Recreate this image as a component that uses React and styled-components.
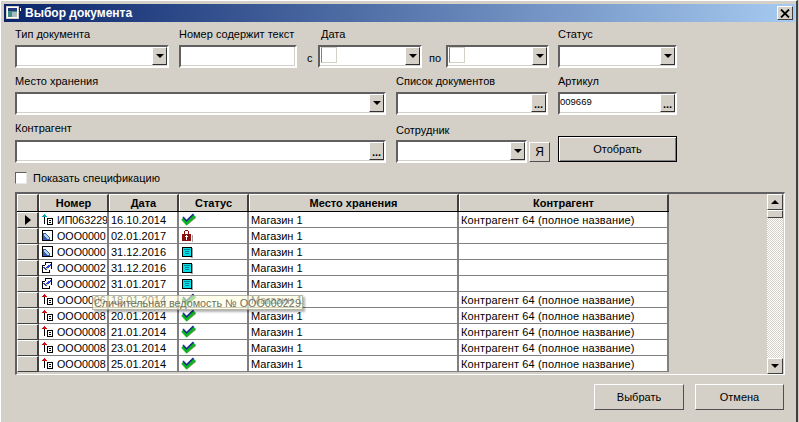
import React from "react";
import styled, { createGlobalStyle } from "styled-components";

const GlobalStyle = createGlobalStyle`
  html, body {
    margin: 0;
    padding: 0;
    background: #d4d0c8;
    overflow: hidden;
  }
  * {
    box-sizing: border-box;
  }
  svg {
    flex-shrink: 0;
  }
`;

const Win = styled.div`
  position: relative;
  width: 798px;
  height: 422px;
  padding: 3px 1px 0 3px;
  background: #d4d0c8;
  border-top: 1px solid #ffffff;
  border-left: 1px solid #ffffff;
  border-right: 2px solid #404040;
  font-family: "Liberation Sans", Arial, sans-serif;
  font-size: 11px;
  color: #000;
`;

const TitleBar = styled.div`
  height: 18px;
  display: flex;
  align-items: center;
  padding: 0 2px;
  gap: 3px;
  background: linear-gradient(90deg, #0a246a, #a6caf0);
  color: #fff;
  font-weight: bold;
  font-size: 12px;
`;

const TitleText = styled.span`
  flex: 1;
`;

const CloseBtn = styled.div`
  width: 16px;
  height: 14px;
  display: flex;
  align-items: center;
  justify-content: center;
  background: #d4d0c8;
  border: 1px solid;
  border-color: #fff #404040 #404040 #fff;
`;

const Form = styled.div`
  display: flex;
  flex-direction: column;
  padding: 0 0 0 11px;
`;

const Row = styled.div`
  display: flex;
  align-items: flex-end;
  height: ${(p) => p.$h}px;
`;

const Field = styled.div`
  display: flex;
  flex-direction: column;
  width: ${(p) => p.$w}px;
  margin-right: ${(p) => p.$mr || 0}px;
  flex-shrink: 0;
`;

const Label = styled.div`
  height: 15px;
  line-height: 13px;
  padding-left: ${(p) => p.$pl || 0}px;
  margin-bottom: ${(p) => p.$mb || 0}px;
  white-space: nowrap;
`;

const Input = styled.div`
  position: relative;
  display: flex;
  align-items: stretch;
  height: 23px;
  background: #fff;
  border: 2px solid;
  border-color: #606060 #fff #fff #606060;
  box-shadow: inset -1px -1px 0 #d4d0c8;
`;

const InputText = styled.div`
  flex: 1;
  font-size: 9.5px;
  line-height: 15px;
`;

const DateBox = styled.div`
  width: 16px;
  height: 16px;
  margin: 0 0 0 1px;
  border: 1px solid #d4d0c8;
  border-left-color: #808080;
  background: #fff;
`;

const Spacer = styled.div`
  flex: 1;
`;

const DropBtn = styled.div`
  width: 15px;
  display: flex;
  align-items: center;
  justify-content: center;
  background: #d4d0c8;
  border: 1px solid;
  border-color: #fff #303030 #303030 #fff;
  margin: 0 0 1px 0;
`;

const Arrow = styled.div`
  width: 0;
  height: 0;
  border-left: 4px solid transparent;
  border-right: 4px solid transparent;
  border-${(p) => (p.$up ? "bottom" : "top")}: 4px solid #000;
`;

const Dots = styled.div`
  font-weight: bold;
  font-size: 11px;
  line-height: 10px;
  margin-top: 1px;
`;

const Conj = styled.div`
  width: ${(p) => p.$w}px;
  height: 23px;
  line-height: 26px;
  padding-left: ${(p) => p.$pl}px;
  flex-shrink: 0;
`;

const MeBtn = styled.div`
  width: 21px;
  height: 20px;
  margin: 0 0 1px 2px;
  display: flex;
  align-items: center;
  justify-content: center;
  font-size: 12px;
  background: #d4d0c8;
  border: 1px solid;
  border-color: #fff #505050 #505050 #fff;
  flex-shrink: 0;
`;

const Push = styled.div`
  height: 26px;
  width: ${(p) => p.$w}px;
  margin-left: ${(p) => p.$ml || 0}px;
  display: flex;
  align-items: center;
  justify-content: center;
  background: #d4d0c8;
  border: 1px solid;
  border-color: ${(p) => (p.$def ? "#000" : "#fff #505050 #505050 #fff")};
  box-shadow: ${(p) =>
    p.$def ? "inset 1px 1px 0 #fff, inset -1px -1px 0 #808080" : "none"};
`;

const FilterSlot = styled.div`
  margin-bottom: 1px;
`;

const CheckRow = styled.div`
  display: flex;
  align-items: center;
  gap: 6px;
  height: 12px;
  margin: 9px 0 0 0;
`;

const CheckBox = styled.div`
  width: 12px;
  height: 12px;
  background: #fff;
  border: 1px solid;
  border-color: #606060 #e8e8e8 #e8e8e8 #606060;
`;

const GridWrap = styled.div`
  display: flex;
  height: 183px;
  margin: 8px 0 0 11px;
  width: 770px;
  background: #d4d0c8;
  border: 1px solid;
  border-width: 2px 1px 1px 2px;
  border-color: #606060 #fff #fff #606060;
`;

const GridBody = styled.div`
  flex: 1;
  overflow: hidden;
`;

const GRID_COLS = "22px 70px 70px 70px 210px 210px";

const HeadRow = styled.div`
  display: grid;
  grid-template-columns: ${GRID_COLS};
  height: 18px;
  border-bottom: 1px solid #000;
  width: 652px;
`;

const HeadCell = styled.div`
  display: flex;
  align-items: center;
  justify-content: center;
  font-weight: bold;
  font-size: 11px;
  background: #d4d0c8;
  border-left: 1px solid #fff;
  border-top: 1px solid #fff;
  border-right: 2px solid #404040;
`;

const DataRow = styled.div`
  display: grid;
  grid-template-columns: ${GRID_COLS};
  height: 16px;
  width: 652px;
  background: #fff;
`;

const Cell = styled.div`
  display: flex;
  align-items: center;
  padding-left: ${(p) => p.$pl ?? 2}px;
  font-size: ${(p) => p.$fs || 11}px;
  white-space: nowrap;
  overflow: hidden;
  border-right: 2px solid #808080;
  border-bottom: 1px solid #808080;
  letter-spacing: ${(p) => p.$ls || 0}px;
`;

const DocSlot = styled.div`
  width: 18px;
  display: flex;
  padding-left: 2px;
  flex-shrink: 0;
`;

const Indicator = styled.div`
  display: flex;
  align-items: center;
  justify-content: flex-start;
  padding-left: 7px;
  background: #d4d0c8;
  border-top: 1px solid #fff;
  border-left: 1px solid #fff;
  border-right: 2px solid #404040;
  border-bottom: 1px solid #404040;
`;

const RowMark = styled.div`
  width: 0;
  height: 0;
  border-top: 5px solid transparent;
  border-bottom: 5px solid transparent;
  border-left: 6px solid #000;
`;

const ScrollBar = styled.div`
  width: 16px;
  margin-right: 1px;
  display: flex;
  flex-direction: column;
  background-color: #eeeeee;
  background-image: conic-gradient(#d4d0c8 25%, #fff 0 50%, #d4d0c8 0 75%, #fff 0);
  background-size: 2px 2px;
`;

const ScrollBtn = styled.div`
  height: 16px;
  display: flex;
  align-items: center;
  justify-content: center;
  background: #d4d0c8;
  border: 1px solid;
  border-color: #fff #404040 #404040 #fff;
  flex-shrink: 0;
`;

const ScrollThumb = styled.div`
  height: 8px;
  background: #d4d0c8;
  border: 1px solid;
  border-color: #fff #404040 #404040 #fff;
  flex-shrink: 0;
`;

const ScrollTrack = styled.div`
  flex: 1;
`;

const Footer = styled.div`
  display: flex;
  justify-content: flex-end;
  gap: 11px;
  margin: 9px 11px 0 0;
`;

const Tooltip = styled.div`
  position: absolute;
  left: 91px;
  top: 294px;
  width: 211px;
  height: 15px;
  padding-left: 1px;
  line-height: 14px;
  font-size: 10.8px;
  color: #6f6f62;
  white-space: nowrap;
  background: rgba(255, 255, 225, 0.62);
  border: 1px solid rgba(120, 120, 110, 0.55);
  box-shadow: 2px 2px 2px rgba(0, 0, 0, 0.3);
`;

const AppIcon = () => (
  <svg width="16" height="14" viewBox="0 0 16 14" shapeRendering="crispEdges">
    <rect x="0" y="0" width="13" height="13" fill="#d4d0c8" />
    <rect x="1" y="1" width="11" height="11" fill="#fff" />
    <rect x="2" y="2" width="9" height="9" fill="#3d8f86" />
    <rect x="2" y="2" width="9" height="3" fill="#23397c" />
    <rect x="6" y="6" width="5" height="5" fill="#a8bcc0" />
    <rect x="14" y="2" width="1" height="3" fill="#fff" />
  </svg>
);

const CloseIcon = () => (
  <svg width="10" height="9" viewBox="0 0 10 9">
    <path d="M1 0.5 L9 8.5 M9 0.5 L1 8.5" stroke="#000" strokeWidth="1.8" />
  </svg>
);

const FlagDoc = ({ color }) => (
  <svg width="13" height="13" viewBox="0 0 13 13" shapeRendering="crispEdges">
    <path d="M1 3h1v-1h1v-1h1v1h1v1h1v1h-5z" fill={color} />
    <rect x="3" y="4" width="1" height="7" fill="#000" />
    <path d="M6 5h6v7h-6zM7 6v5h4v-5z" fill="#000" fillRule="evenodd" />
    <rect x="8" y="7" width="2" height="1" fill="#000" />
    <rect x="8" y="9" width="2" height="1" fill="#000" />
  </svg>
);

const TableDoc = () => (
  <svg width="13" height="13" viewBox="0 0 13 13" shapeRendering="crispEdges">
    <path d="M1 1h11v11h-11zM2 2v9h9v-9z" fill="#000" fillRule="evenodd" />
    <rect x="2" y="2" width="9" height="9" fill="#fff" />
    <path d="M2 4h3v1h1v1h1v1h1v1h1v3h-7z" fill="#3a58b8" />
    <path d="M3 5h2v1h1v1h1v1h1v2h-2v-1h-1v-1h-1v-1h-1z" fill="#a8d8f0" />
  </svg>
);

const CheckDoc = () => (
  <svg width="13" height="13" viewBox="0 0 13 13" shapeRendering="crispEdges">
    <path d="M4 1h7v7h-1v-6h-5v2h-1z" fill="#000" />
    <path d="M1 4h3v1h-2v6h6v-2h1v3h-8z" fill="#000" />
    <rect x="5" y="2" width="5" height="2" fill="#fff" />
    <path d="M2 6h2v1h1v-1h1v-1h1v-1h2v-1h1v2h-1v1h-1v1h-1v1h-1v1h-2v-1h-1v-1h-1z" fill="#3048c0" />
    <rect x="5" y="7" width="2" height="1" fill="#f0d040" />
  </svg>
);

const CheckIcon = () => (
  <svg width="16" height="13" viewBox="0 0 16 13">
    <path d="M2.5 7 L6 11 L14.5 4" fill="none" stroke="#8c8c70" strokeWidth="2" />
    <path d="M1.5 5.5 L5.5 10 L13.5 2.5" fill="none" stroke="#0ab81a" strokeWidth="3.4" />
    <path d="M2 4 L5.5 7.8 L12.5 1.2" fill="none" stroke="#1c2c90" strokeWidth="1.6" />
  </svg>
);

const LockIcon = () => (
  <svg width="12" height="13" viewBox="0 0 12 13" shapeRendering="crispEdges">
    <path d="M3 5V2h1V1h3v1h1v3h-1V2H4v3z" fill="#8b1010" />
    <rect x="1" y="5" width="9" height="7" fill="#8b1010" />
    <rect x="11" y="6" width="1" height="7" fill="#a0a0a0" />
    <rect x="5" y="6" width="1" height="5" fill="#fff" />
    <rect x="4" y="7" width="3" height="1" fill="#fff" />
  </svg>
);

const NoteIcon = () => (
  <svg width="12" height="12" viewBox="0 0 12 12" shapeRendering="crispEdges">
    <rect x="10" y="2" width="2" height="10" fill="#a0a0a0" />
    <rect x="1" y="1" width="10" height="10" fill="#000" />
    <rect x="2" y="2" width="8" height="8" fill="#00e0e8" />
    <rect x="3" y="3" width="6" height="1" fill="#0a8088" />
    <rect x="4" y="5" width="4" height="1" fill="#0a8088" />
    <rect x="4" y="7" width="4" height="1" fill="#0a8088" />
  </svg>
);

const FULL = "Контрагент 64 (полное название)";

const rows = [
  { doc: "teal", num: "ИП063229", date: "16.10.2014", st: "ok", cp: FULL, cur: true },
  { doc: "table", num: "ООО0000", date: "02.01.2017", st: "lock", cp: "" },
  { doc: "table", num: "ООО0000", date: "31.12.2016", st: "note", cp: "" },
  { doc: "check", num: "ООО0002", date: "31.12.2016", st: "note", cp: "" },
  { doc: "check", num: "ООО0002", date: "31.01.2017", st: "note", cp: "" },
  { doc: "red", num: "ООО0006", date: "18.01.2014", st: "ok", cp: FULL },
  { doc: "red", num: "ООО0008", date: "20.01.2014", st: "ok", cp: FULL },
  { doc: "red", num: "ООО0008", date: "21.01.2014", st: "ok", cp: FULL },
  { doc: "red", num: "ООО0008", date: "23.01.2014", st: "ok", cp: FULL },
  { doc: "red", num: "ООО0008", date: "25.01.2014", st: "ok", cp: FULL },
];

const docIcon = (d) => {
  if (d === "teal") return <FlagDoc color="#00a8b0" />;
  if (d === "red") return <FlagDoc color="#d01010" />;
  if (d === "table") return <TableDoc />;
  return <CheckDoc />;
};

const statusIcon = (s) => {
  if (s === "ok") return <CheckIcon />;
  if (s === "lock") return <LockIcon />;
  return <NoteIcon />;
};

const Combo = ({ date }) => (
  <Input>
    {date && <DateBox />}
    <Spacer />
    <DropBtn>
      <Arrow />
    </DropBtn>
  </Input>
);

const Lookup = ({ text }) => (
  <Input>
    {text ? <InputText>{text}</InputText> : <Spacer />}
    <DropBtn>
      <Dots>...</Dots>
    </DropBtn>
  </Input>
);

export default function App() {
  return (
    <Win>
      <GlobalStyle />
      <TitleBar>
        <AppIcon />
        <TitleText>Выбор документа</TitleText>
        <CloseBtn>
          <CloseIcon />
        </CloseBtn>
      </TitleBar>
      <Form>
        <Row $h={46}>
          <Field $w={154} $mr={10}>
            <Label $mb={2}>Тип документа</Label>
            <Combo />
          </Field>
          <Field $w={118}>
            <Label $mb={2}>Номер содержит текст</Label>
            <Input />
          </Field>
          <Conj $w={21} $pl={10}>с</Conj>
          <Field $w={104}>
            <Label $mb={2} $pl={3}>Дата</Label>
            <Combo date />
          </Field>
          <Conj $w={24} $pl={7}>по</Conj>
          <Field $w={103} $mr={9}>
            <Combo date />
          </Field>
          <Field $w={119}>
            <Label $mb={2}>Статус</Label>
            <Combo />
          </Field>
        </Row>
        <Row $h={47}>
          <Field $w={371} $mr={10}>
            <Label $mb={2}>Место хранения</Label>
            <Combo />
          </Field>
          <Field $w={152} $mr={10}>
            <Label $mb={2}>Список документов</Label>
            <Lookup />
          </Field>
          <Field $w={119}>
            <Label $mb={2}>Артикул</Label>
            <Lookup text="009669" />
          </Field>
        </Row>
        <Row $h={48}>
          <Field $w={371} $mr={10}>
            <Label $mb={3}>Контрагент</Label>
            <Lookup />
          </Field>
          <Field $w={131}>
            <Label $mb={1}>Сотрудник</Label>
            <Combo />
          </Field>
          <MeBtn>Я</MeBtn>
          <FilterSlot>
            <Push $def $w={119} $ml={8}>Отобрать</Push>
          </FilterSlot>
        </Row>
        <CheckRow>
          <CheckBox />
          <span>Показать спецификацию</span>
        </CheckRow>
      </Form>
      <GridWrap>
        <GridBody>
          <HeadRow>
            <HeadCell />
            <HeadCell>Номер</HeadCell>
            <HeadCell>Дата</HeadCell>
            <HeadCell>Статус</HeadCell>
            <HeadCell>Место хранения</HeadCell>
            <HeadCell>Контрагент</HeadCell>
          </HeadRow>
          {rows.map((r, i) => (
            <DataRow key={i}>
              <Indicator>{r.cur && <RowMark />}</Indicator>
              <Cell $pl={0} $fs={10.7}>
                <DocSlot>{docIcon(r.doc)}</DocSlot>
                {r.num}
              </Cell>
              <Cell $pl={2}>{r.date}</Cell>
              <Cell>{statusIcon(r.st)}</Cell>
              <Cell>Магазин 1</Cell>
              <Cell $ls={0.13}>{r.cp}</Cell>
            </DataRow>
          ))}
        </GridBody>
        <ScrollBar>
          <ScrollBtn>
            <Arrow $up />
          </ScrollBtn>
          <ScrollThumb />
          <ScrollTrack />
          <ScrollBtn>
            <Arrow />
          </ScrollBtn>
        </ScrollBar>
      </GridWrap>
      <Footer>
        <Push $w={90}>Выбрать</Push>
        <Push $w={89}>Отмена</Push>
      </Footer>
      <Tooltip>Сличительная ведомость № ООО000229</Tooltip>
    </Win>
  );
}
